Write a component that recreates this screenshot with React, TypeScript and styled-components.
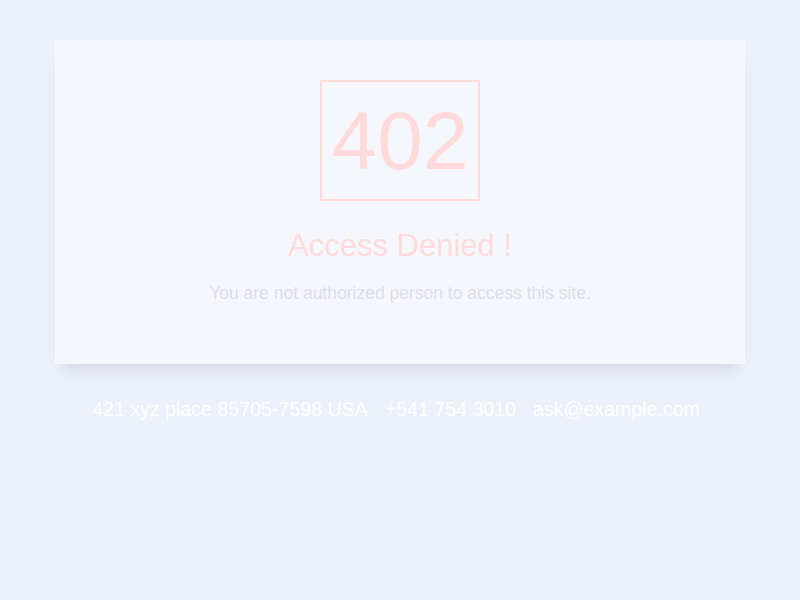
import React from 'react';
import styled, { createGlobalStyle } from 'styled-components';

const GlobalStyle = createGlobalStyle`
  html, body {
    margin: 0;
    padding: 0;
    background: #ecf0fb;
    font-family: "Liberation Sans", Arial, sans-serif;
  }
`;

const Page = styled.div`
  min-height: 600px;
  padding: 40px 55px 0;
  box-sizing: border-box;
  display: flex;
  flex-direction: column;
  align-items: stretch;
`;

const Card = styled.div`
  background: #f6f7fd;
  box-shadow: 0 12px 16px -8px rgba(0, 0, 0, 0.12);
  padding: 40px 20px 60px;
  display: flex;
  flex-direction: column;
  align-items: center;
`;

const CodeBox = styled.div`
  border: 2px solid #ffdada;
  width: 160px;
  height: 121px;
  box-sizing: border-box;
  display: flex;
  align-items: center;
  justify-content: center;
  font-size: 82px;
  line-height: 1;
  color: #ffdada;
`;

const Title = styled.h1`
  margin: 27px 0 0;
  font-weight: 400;
  font-size: 31px;
  line-height: 35px;
  color: #ffdada;
`;

const Message = styled.p`
  margin: 19px 0 0;
  font-size: 17.5px;
  line-height: 22px;
  color: #dcdee6;
`;

const Footer = styled.div`
  display: flex;
  justify-content: center;
  gap: 17px;
  margin-top: 33px;
  padding-right: 8px;
  font-size: 19.6px;
  line-height: 24px;
  color: #ffffff;
`;

export default function App() {
  return (
    <>
      <GlobalStyle />
      <Page>
        <Card>
          <CodeBox>402</CodeBox>
          <Title>Access Denied !</Title>
          <Message>You are not authorized person to access this site.</Message>
        </Card>
        <Footer>
          <span>421 xyz place 85705-7598 USA</span>
          <span>+541 754 3010</span>
          <span>ask@example.com</span>
        </Footer>
      </Page>
    </>
  );
}
